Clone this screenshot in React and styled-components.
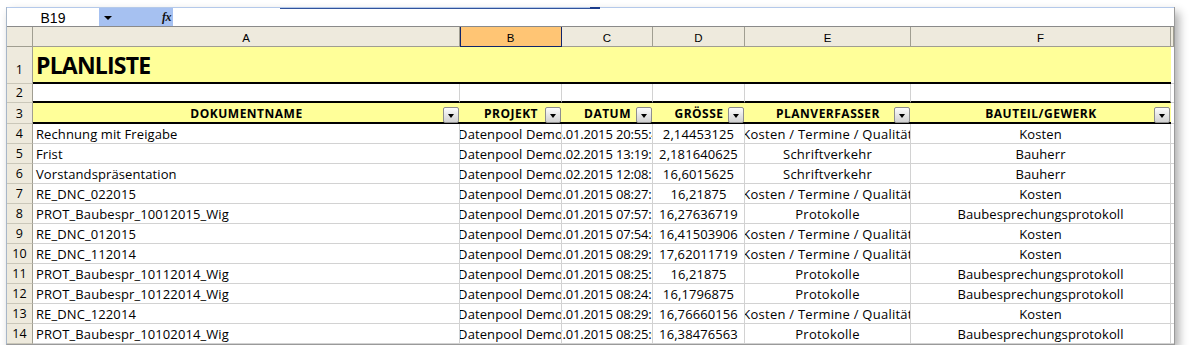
import React from "react";
import styled, { createGlobalStyle, css } from "styled-components";

const GlobalStyle = createGlobalStyle`
  html, body { margin: 0; padding: 0; background: #ffffff; }
  body { font-family: "Open Sans", "Liberation Sans", sans-serif; }
`;

const Page = styled.div`
  padding: 7px 0 0 6px;
`;

const Frame = styled.div`
  width: 1167px;
  border-left: 1px solid #a7b6c8;
  border-right: 1px solid #9a9a9a;
  border-bottom: 1px solid #9a9a9a;
  box-shadow: 4px 5px 9px rgba(0, 0, 0, 0.32);
  background: #ffffff;
`;

const FormulaBar = styled.div`
  display: flex;
  height: 18px;
  border-top: 1px solid #b4c9ea;
  border-bottom: 1px solid #8a8a8a;
  position: relative;
  background: #ffffff;
`;

const TopAccent = styled.div`
  position: absolute;
  top: 0;
  left: 273px;
  width: 312px;
  height: 1px;
  background: #30529c;
  &::after {
    content: "";
    position: absolute;
    left: 310px;
    top: -1px;
    width: 10px;
    height: 2px;
    background: #1b3c8c;
  }
`;

const NameBox = styled.div`
  width: 92px;
  display: flex;
  align-items: center;
  justify-content: center;
  font-family: "Liberation Sans", Arial, sans-serif;
  font-size: 14px;
  color: #000;
  padding-top: 1px;
  box-sizing: border-box;
`;

const NameDrop = styled.div`
  width: 74px;
  display: flex;
  align-items: center;
  justify-content: space-between;
  padding: 0 2px 0 5px;
  box-sizing: border-box;
  background: #a6c1f1;
`;

const DropTriangle = styled.span`
  width: 0;
  height: 0;
  border-left: 4px solid transparent;
  border-right: 4px solid transparent;
  border-top: 4px solid #000;
  margin-top: 1px;
`;

const Fx = styled.span`
  font-family: "Liberation Serif", "Times New Roman", serif;
  font-style: italic;
  font-weight: bold;
  font-size: 12px;
  color: #111;
  letter-spacing: -0.5px;
`;

const FormulaInput = styled.div`
  flex: 1;
  background: #ffffff;
`;

const Grid = styled.div`
  display: grid;
  grid-template-columns: 26px 427px 102px 91px 92px 166px 260px 3px;
  grid-template-rows: 20px 37px 19px 21px repeat(11, 20px);
`;

const ColHead = styled.div`
  box-sizing: border-box;
  background: ${(p) => (p.$selected ? "#ffc574" : "#eeeadd")};
  border-right: 1px solid #a09e91;
  border-bottom: 1px solid #a09e91;
  display: flex;
  align-items: center;
  justify-content: center;
  font-family: "Liberation Sans", Arial, sans-serif;
  font-size: 11.5px;
  color: #000;
  padding-top: 2px;
  ${(p) =>
    p.$selected &&
    css`
      border-right-color: #10256b;
      border-bottom-color: #10256b;
      box-shadow: inset 1px 0 #10256b;
    `}
`;

const RowHead = styled.div`
  box-sizing: border-box;
  background: #eeeadd;
  border-right: 1px solid #a09e91;
  border-bottom: 1px solid #cac7b9;
  display: flex;
  align-items: flex-end;
  justify-content: center;
  padding-bottom: ${(p) => (p.$tall ? "5px" : "1px")};
  line-height: 17px;
  font-family: "Open Sans", sans-serif;
  font-size: 12.5px;
  letter-spacing: 0.2px;
  color: #000;
`;

const TitleCell = styled.div`
  grid-column: span 6;
  box-sizing: border-box;
  background: #ffff99;
  border-bottom: 2px solid #000;
  display: flex;
  align-items: flex-end;
  padding: 0 0 5px 3px;
  font-family: "Open Sans", sans-serif;
  font-weight: 700;
  font-size: 23px;
  letter-spacing: -0.8px;
  line-height: 1;
  color: #000;
`;

const EdgeCell = styled.div`
  box-sizing: border-box;
  background: #ffffff;
  border-bottom: 1px solid #d2d2d2;
`;

const BlankCell = styled.div`
  box-sizing: border-box;
  background: #ffffff;
  border-right: 1px solid #d2d2d2;
  border-bottom: 2px solid #000;
`;

const FilterHead = styled.div`
  position: relative;
  box-sizing: border-box;
  background: #ffff99;
  border-bottom: 2px solid #000;
  display: flex;
  align-items: center;
  justify-content: center;
  padding-top: 1px;
  font-family: "Open Sans", sans-serif;
  font-weight: 700;
  font-size: 12px;
  letter-spacing: 0.5px;
  color: #000;
  white-space: nowrap;
`;

const FilterButton = styled.span`
  position: absolute;
  right: 1px;
  bottom: -1px;
  width: 16px;
  height: 16px;
  box-sizing: border-box;
  border: 1px solid #8e8e8e;
  border-radius: 2px;
  background: linear-gradient(#fdfdfd, #e4e4e4 55%, #d2d2d2);
  display: flex;
  align-items: center;
  justify-content: center;
  &::after {
    content: "";
    width: 0;
    height: 0;
    border-left: 3.5px solid transparent;
    border-right: 3.5px solid transparent;
    border-top: 4px solid #000;
    margin-top: 1px;
  }
`;

const DataCell = styled.div`
  box-sizing: border-box;
  background: #ffffff;
  border-right: 1px solid #d2d2d2;
  border-bottom: 1px solid #d2d2d2;
  overflow: hidden;
  white-space: nowrap;
  display: flex;
  align-items: center;
  justify-content: ${(p) => (p.$align === "left" ? "flex-start" : "center")};
  padding: 1px ${(p) => (p.$align === "left" ? "3px" : "0")} 0;
  font-family: "Open Sans", sans-serif;
  font-size: 13px;
  letter-spacing: ${(p) => (p.$spacing != null ? p.$spacing : 0.1)}px;
  color: #000;
`;

const columns = ["A", "B", "C", "D", "E", "F"];

const headers = [
  "DOKUMENTNAME",
  "PROJEKT",
  "DATUM",
  "GRÖSSE",
  "PLANVERFASSER",
  "BAUTEIL/GEWERK",
];

const KTQ = "Kosten / Termine / Qualität";
const PROT = "Protokolle";
const BSP = "Baubesprechungsprotokoll";

const rows = [
  ["Rechnung mit Freigabe", "26.01.2015 20:55:41", "2,14453125", KTQ, "Kosten"],
  ["Frist", "11.02.2015 13:19:07", "2,181640625", "Schriftverkehr", "Bauherr"],
  ["Vorstandspräsentation", "11.02.2015 12:08:33", "16,6015625", "Schriftverkehr", "Bauherr"],
  ["RE_DNC_022015", "27.01.2015 08:27:15", "16,21875", KTQ, "Kosten"],
  ["PROT_Baubespr_10012015_Wig", "27.01.2015 07:57:22", "16,27636719", PROT, BSP],
  ["RE_DNC_012015", "27.01.2015 07:54:48", "16,41503906", KTQ, "Kosten"],
  ["RE_DNC_112014", "27.01.2015 08:29:10", "17,62011719", KTQ, "Kosten"],
  ["PROT_Baubespr_10112014_Wig", "27.01.2015 08:25:36", "16,21875", PROT, BSP],
  ["PROT_Baubespr_10122014_Wig", "27.01.2015 08:24:19", "16,1796875", PROT, BSP],
  ["RE_DNC_122014", "27.01.2015 08:29:54", "16,76660156", KTQ, "Kosten"],
  ["PROT_Baubespr_10102014_Wig", "27.01.2015 08:25:03", "16,38476563", PROT, BSP],
];

export default function App() {
  return (
    <>
      <GlobalStyle />
      <Page>
        <Frame>
          <FormulaBar>
            <TopAccent />
            <NameBox>B19</NameBox>
            <NameDrop>
              <DropTriangle />
              <Fx>fx</Fx>
            </NameDrop>
            <FormulaInput />
          </FormulaBar>
          <Grid>
            <ColHead />
            {columns.map((c) => (
              <ColHead key={c} $selected={c === "B"}>
                {c}
              </ColHead>
            ))}
            <ColHead />

            <RowHead $tall>1</RowHead>
            <TitleCell>PLANLISTE</TitleCell>
            <EdgeCell />

            <RowHead>2</RowHead>
            {columns.map((c) => (
              <BlankCell key={c} />
            ))}
            <EdgeCell />

            <RowHead>3</RowHead>
            {headers.map((h) => (
              <FilterHead key={h}>
                {h}
                <FilterButton />
              </FilterHead>
            ))}
            <EdgeCell />

            {rows.map((r, i) => (
              <React.Fragment key={i}>
                <RowHead>{i + 4}</RowHead>
                <DataCell $align="left">{r[0]}</DataCell>
                <DataCell>Datenpool Demo</DataCell>
                <DataCell $spacing={-0.15}>{r[1]}</DataCell>
                <DataCell>{r[2]}</DataCell>
                <DataCell $spacing={0.25}>{r[3]}</DataCell>
                <DataCell>{r[4]}</DataCell>
                <EdgeCell />
              </React.Fragment>
            ))}
          </Grid>
        </Frame>
      </Page>
    </>
  );
}
